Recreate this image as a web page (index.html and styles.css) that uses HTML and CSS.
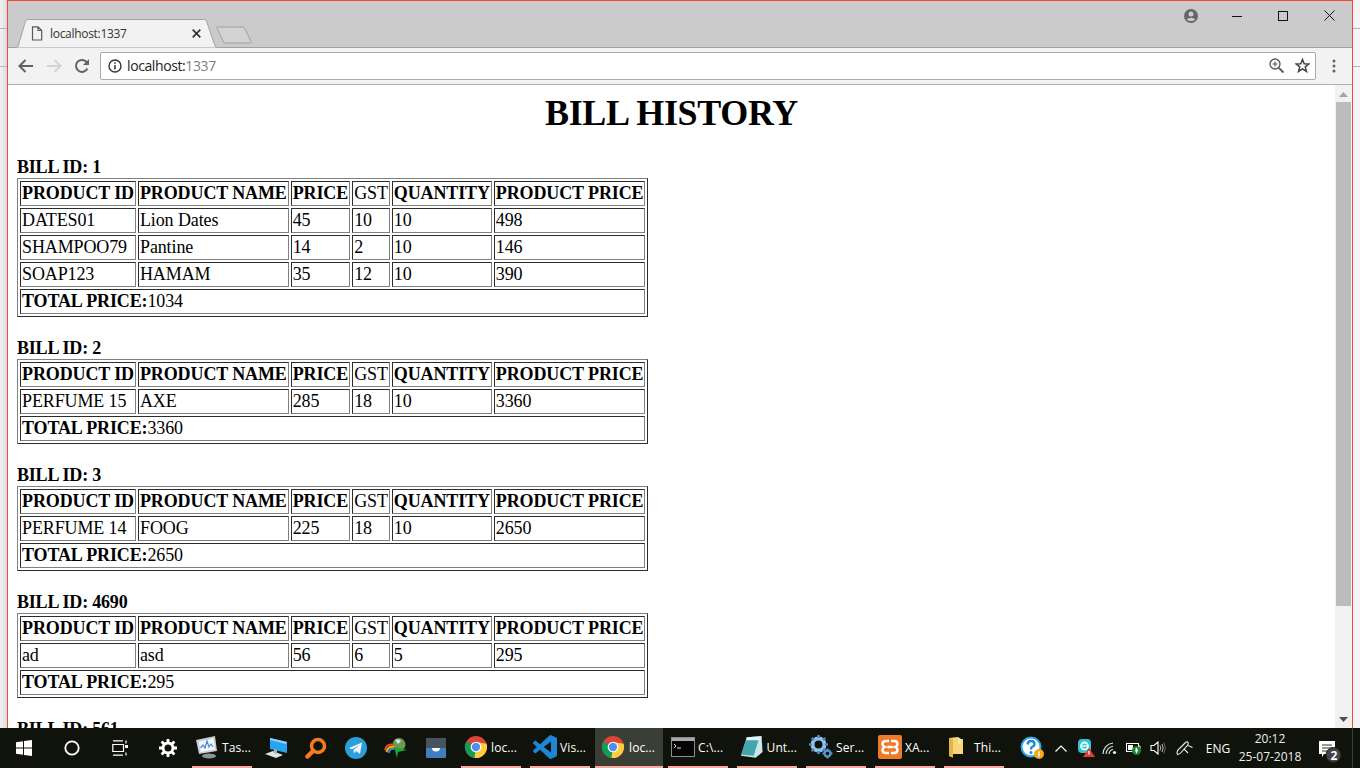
FILE: index.html
```html
<!DOCTYPE html>
<html lang="en">
<head>
<meta charset="utf-8">
<title>localhost:1337</title>
<link rel="stylesheet" href="styles.css">
</head>
<body>
<svg class="defs" width="0" height="0" aria-hidden="true">
  <symbol id="chrome" viewBox="-1 -1 26 26">
    <circle cx="12" cy="12" r="12" fill="#db4437"/>
    <path d="M12 12 L1.600 6 A12 12 0 0 0 10.300 23.900 Z" fill="#0f9d58"/>
    <path d="M12 12 L10.300 23.900 A12 12 0 0 0 23.500 8.600 L12 6.500 Z" fill="#ffcd40"/>
    <circle cx="12" cy="12" r="5.800" fill="#fff"/>
    <circle cx="12" cy="12" r="4.500" fill="#4d8ff0"/>
  </symbol>
</svg>
<div class="desktop">
  <div class="stage">
    <div class="edge edge-left"><i class="edge-line"></i><i class="edge-line"></i></div>
    <div class="window">
      <div class="tabstrip">
        <div class="tab">
          <svg class="tab-shape" width="204" height="29" viewBox="0 0 204 29"><path d="M0 28.500 H1 Q2.500 28.500 3.200 27 L10.500 2 Q11.200 .5 13 .5 H189 Q190.800 .5 191.500 2 L200 27 Q200.700 28.500 202.500 28.500 H204 V29 H0 Z" fill="#f2f2f2" stroke="#a3a3a3"/></svg>
          <svg class="tab-file" width="12" height="15" viewBox="0 0 12 15"><path d="M1.500 .8 H7 L10.700 4.500 V14 H1.500 Z M7 .8 V4.500 H10.700" fill="none" stroke="#5a5a5a" stroke-width="1.200"/></svg>
          <span class="tab-title">localhost:1337</span>
          <svg class="tab-close" width="9" height="9" viewBox="0 0 9 9"><path d="M.7 .7 L8.300 8.300 M8.300 .7 L.7 8.300" stroke="#333" stroke-width="1.700"/></svg>
        </div>
        <svg class="newtab" width="36" height="18" viewBox="0 0 36 18"><path d="M1.500 1 H27 Q28 1 28.500 2 L35 15.500 Q35.300 17 34 17 H9 Q8 17 7.500 16 L1 2 Q.8 1 1.500 1 Z" fill="#d3d3d3" stroke="#a0a0a0" stroke-width="1"/></svg>
        <div class="winctrls">
          <svg class="profile" width="16" height="16" viewBox="0 0 16 16"><circle cx="8" cy="8" r="7" fill="#666"/><circle cx="8" cy="6" r="2.500" fill="#ccc"/><path d="M3.500 11.500 Q8 8 12.500 11.500 Q8 14.500 3.500 11.500 Z" fill="#ccc"/></svg>
          <span class="winbtn"><svg width="10" height="10" viewBox="0 0 10 10"><path d="M0 5.500 H10" stroke="#111" stroke-width="1"/></svg></span>
          <span class="winbtn"><svg width="10" height="10" viewBox="0 0 10 10"><rect x=".5" y=".5" width="9" height="9" fill="none" stroke="#111"/></svg></span>
          <span class="winbtn"><svg width="11" height="11" viewBox="0 0 11 11"><path d="M.5 .5 L10.500 10.500 M10.500 .5 L.5 10.500" stroke="#111" stroke-width="1"/></svg></span>
        </div>
      </div>
      <div class="toolbar">
        <svg class="navicon" width="16" height="14" viewBox="0 0 16 14"><path d="M15 7 H2 M7.500 1 L1.500 7 L7.500 13" fill="none" stroke="#5f6368" stroke-width="2"/></svg>
        <svg class="navicon" width="16" height="14" viewBox="0 0 16 14"><path d="M1 7 H14 M8.500 1 L14.500 7 L8.500 13" fill="none" stroke="#d4d4d4" stroke-width="2"/></svg>
        <svg class="navicon" width="16" height="16" viewBox="0 0 16 16"><path d="M13.400 10.500 A6 6 0 1 1 13 4.600" fill="none" stroke="#5f6368" stroke-width="2"/><path d="M15 1 V7 H9 Z" fill="#5f6368"/></svg>
        <div class="omnibox">
          <svg class="info" width="14" height="14" viewBox="0 0 14 14"><circle cx="7" cy="7" r="6" fill="none" stroke="#333" stroke-width="1.400"/><path d="M7 6 V10.500 M7 3.300 V4.800" stroke="#333" stroke-width="1.500"/></svg>
          <span class="url">localhost:<span class="port">1337</span></span>
          <svg class="omni-zoom" width="17" height="17" viewBox="0 0 17 17"><circle cx="7" cy="7" r="5" fill="none" stroke="#555" stroke-width="1.300"/><path d="M7 4.500 V9.500 M4.500 7 H9.500" stroke="#555" stroke-width="1.100"/><path d="M10.800 10.800 L15.500 15.500" stroke="#555" stroke-width="1.800"/></svg>
          <svg class="omni-star" width="15" height="15" viewBox="0 0 15 15"><path d="M7.500 1.500 L9.200 5.800 L13.900 6 L10.200 8.900 L11.500 13.500 L7.500 10.900 L3.500 13.500 L4.800 8.900 L1.100 6 L5.800 5.800 Z" fill="none" stroke="#444" stroke-width="1.500"/></svg>
        </div>
        <svg class="menu" width="4" height="14" viewBox="0 0 4 14"><circle cx="2" cy="2" r="1.500" fill="#5f6368"/><circle cx="2" cy="7" r="1.500" fill="#5f6368"/><circle cx="2" cy="12" r="1.500" fill="#5f6368"/></svg>
      </div>
      <div class="viewport">
        <div class="page">
          <h1 class="title">BILL HISTORY</h1>

          <section class="bill">
            <div class="bill-id">BILL ID: 1</div>
            <table class="bill-table">
              <tr><th>PRODUCT ID</th><th>PRODUCT NAME</th><th>PRICE</th><td>GST</td><th>QUANTITY</th><th>PRODUCT PRICE</th></tr>
              <tr><td>DATES01</td><td>Lion Dates</td><td>45</td><td>10</td><td>10</td><td>498</td></tr>
              <tr><td>SHAMPOO79</td><td>Pantine</td><td>14</td><td>2</td><td>10</td><td>146</td></tr>
              <tr><td>SOAP123</td><td>HAMAM</td><td>35</td><td>12</td><td>10</td><td>390</td></tr>
              <tr><td colspan="6"><b>TOTAL PRICE:</b>1034</td></tr>
            </table>
          </section>

          <section class="bill">
            <div class="bill-id">BILL ID: 2</div>
            <table class="bill-table">
              <tr><th>PRODUCT ID</th><th>PRODUCT NAME</th><th>PRICE</th><td>GST</td><th>QUANTITY</th><th>PRODUCT PRICE</th></tr>
              <tr><td>PERFUME 15</td><td>AXE</td><td>285</td><td>18</td><td>10</td><td>3360</td></tr>
              <tr><td colspan="6"><b>TOTAL PRICE:</b>3360</td></tr>
            </table>
          </section>

          <section class="bill">
            <div class="bill-id">BILL ID: 3</div>
            <table class="bill-table">
              <tr><th>PRODUCT ID</th><th>PRODUCT NAME</th><th>PRICE</th><td>GST</td><th>QUANTITY</th><th>PRODUCT PRICE</th></tr>
              <tr><td>PERFUME 14</td><td>FOOG</td><td>225</td><td>18</td><td>10</td><td>2650</td></tr>
              <tr><td colspan="6"><b>TOTAL PRICE:</b>2650</td></tr>
            </table>
          </section>

          <section class="bill">
            <div class="bill-id">BILL ID: 4690</div>
            <table class="bill-table">
              <tr><th>PRODUCT ID</th><th>PRODUCT NAME</th><th>PRICE</th><td>GST</td><th>QUANTITY</th><th>PRODUCT PRICE</th></tr>
              <tr><td>ad</td><td>asd</td><td>56</td><td>6</td><td>5</td><td>295</td></tr>
              <tr><td colspan="6"><b>TOTAL PRICE:</b>295</td></tr>
            </table>
          </section>

          <section class="bill">
            <div class="bill-id">BILL ID: 561</div>
          </section>
        </div>
        <div class="scrollbar">
          <svg class="sb-arrow" width="9" height="5" viewBox="0 0 9 5"><path d="M4.500 0 L9 5 H0 Z" fill="#a3a3a3"/></svg>
          <div class="sb-thumb"></div>
          <svg class="sb-arrow sb-arrow-down" width="9" height="5" viewBox="0 0 9 5"><path d="M0 0 H9 L4.500 5 Z" fill="#505050"/></svg>
        </div>
      </div>
    </div>
    <div class="edge edge-right"><i class="edge-line"></i><i class="edge-line"></i></div>
  </div>

  <div class="taskbar">
    <span class="tb-sys"><svg width="16" height="16" viewBox="0 0 16 16"><path d="M0 2.300 L7 1.300 V7.500 H0 Z M8 1.100 L16 0 V7.500 H8 Z M0 8.500 H7 V14.700 L0 13.700 Z M8 8.500 H16 V16 L8 14.900 Z" fill="#fff"/></svg></span>
    <span class="tb-sys"><svg width="16" height="16" viewBox="0 0 16 16"><circle cx="8" cy="8" r="6.700" fill="none" stroke="#fff" stroke-width="1.800"/></svg></span>
    <span class="tb-sys"><svg width="17" height="16" viewBox="0 0 17 16"><path d="M1 .8 H11 M1 15.200 H11 M.8 4.500 H11.500 V11.500 H.8 Z M14 .5 V3.500 M14 12.500 V15.500" fill="none" stroke="#fff" stroke-width="1.200"/><rect x="13" y="5" width="3" height="3" fill="#fff"/></svg></span>
    <span class="tb-sys"><svg width="18" height="18" viewBox="0 0 18 18"><circle cx="9" cy="9" r="5" fill="none" stroke="#fff" stroke-width="3"/><path d="M9 0 V4 M9 14 V18 M0 9 H4 M14 9 H18 M2.600 2.600 L5.500 5.500 M12.500 12.500 L15.400 15.400 M2.600 15.400 L5.500 12.500 M12.500 5.500 L15.400 2.600" stroke="#fff" stroke-width="2.800"/></svg></span>

    <div class="app app-flush">
      <svg width="24" height="24" viewBox="0 0 24 24"><path d="M1 5 L20 1 L22 16 L4 19 Z" fill="#c6ced4"/><path d="M3.500 6.500 L18.500 3.500 L20 14.500 L5.500 17 Z" fill="#f4f8fc"/><path d="M5.500 13 L8 10 L10 13 L12 6 L14 12 L16 9 L18 12" fill="none" stroke="#3d8fd8" stroke-width="1.200"/><ellipse cx="14" cy="21" rx="7" ry="2.500" fill="#8c9297"/></svg>
      <span class="app-label">Tas...</span>
    </div>

    <span class="pin pin-first"><svg width="24" height="22" viewBox="0 0 24 22"><path d="M6 1 L23 5 V16 L6 12 Z" fill="#2aa3ee"/><path d="M6 1 L23 5 L22 7 L6 3 Z" fill="#8ed4fa"/><path d="M1 17 L9 14 L19 18 L12 21 Z" fill="#dfe3e6"/><path d="M10 12 L13 13 V17 L10 16 Z" fill="#aeb5ba"/></svg></span>
    <span class="pin"><svg width="22" height="22" viewBox="0 0 22 22"><circle cx="13" cy="9" r="6.500" fill="none" stroke="#f47b20" stroke-width="3.500"/><path d="M8 14 L2.500 19.500" stroke="#f47b20" stroke-width="4.500" stroke-linecap="round"/></svg></span>
    <span class="pin"><svg width="22" height="22" viewBox="0 0 22 22"><circle cx="11" cy="11" r="11" fill="#2a9fdc"/><path d="M4 11 L17 5.500 L15 17 L11 14 L9 16.500 L8.500 12.800 L14.500 8 L7 12.300 Z" fill="#eef7fc"/></svg></span>
    <span class="pin"><svg width="24" height="22" viewBox="0 0 24 22"><circle cx="15" cy="7.500" r="6.500" fill="#6f9a4b"/><path d="M11 3 Q15 1 17 4 L14 7 Z" fill="#cfe3f5"/><path d="M1 13 Q3 6 10 8" fill="none" stroke="#e8453c" stroke-width="2"/><path d="M2.500 15 Q4 9 10 10" fill="none" stroke="#f4b400" stroke-width="2"/><path d="M4.500 16 Q6 11 10 12" fill="none" stroke="#3f8bde" stroke-width="2"/><path d="M10 10 L23 13 L14 15 L13 21 Z" fill="#15a63c"/></svg></span>
    <span class="pin"><svg width="20" height="20" viewBox="0 0 20 20"><rect width="20" height="20" rx="1.500" fill="#3f7fbb"/><path d="M1.500 0 H18.500 Q20 0 20 1.500 V10 H0 V1.500 Q0 0 1.500 0 Z" fill="#48535d"/><path d="M6 10 A4 3.500 0 0 0 14 10 Z" fill="#fff"/></svg></span>

    <div class="app app-gap-small">
      <svg width="24" height="24"><use href="#chrome"/></svg>
      <span class="app-label">loc...</span>
    </div>
    <div class="app">
      <svg width="24" height="24" viewBox="0 0 24 24"><path fill="#1f86d4" d="M23.150 2.587L18.210.21a1.494 1.494 0 0 0-1.705.29l-9.460 8.630-4.120-3.128a.999.999 0 0 0-1.276.057L.327 7.261A1 1 0 0 0 .326 8.740L3.899 12 .326 15.260a1 1 0 0 0 .001 1.479L1.650 17.940a.999.999 0 0 0 1.276.057l4.120-3.128 9.460 8.630a1.492 1.492 0 0 0 1.704.29l4.942-2.377A1.500 1.500 0 0 0 24 20.060V3.939a1.500 1.500 0 0 0-.85-1.352zm-5.146 14.861L10.826 12l7.178-5.448v10.896z"/></svg>
      <span class="app-label">Vis...</span>
    </div>
    <div class="app app-active app-gap-small">
      <svg width="24" height="24"><use href="#chrome"/></svg>
      <span class="app-label">loc...</span>
    </div>
    <div class="app app-gap-small">
      <svg width="24" height="20" viewBox="0 0 24 20"><rect x=".5" y=".5" width="23" height="19" fill="#050505" stroke="#8d8d8d"/><rect x="1" y="1" width="22" height="3" fill="#a8a8a8"/><path d="M3 7 L5 9 L3 11 M6 11 H10" fill="none" stroke="#ddd"/></svg>
      <span class="app-label">C:\...</span>
    </div>
    <div class="app">
      <svg width="24" height="24" viewBox="0 0 24 24"><path d="M7 2 L22 1 L23 17 L16 23 L1 21 Z" fill="#c9e6e8"/><path d="M7 2 L20 1 L14 21 L1 20 Z" fill="#45a5ae"/><path d="M7 2 L22 1 L21 5 L6 5 Z" fill="#e4f3f4"/></svg>
      <span class="app-label">Unt...</span>
    </div>
    <div class="app">
      <svg width="24" height="24" viewBox="0 0 24 24"><circle cx="9.500" cy="9.500" r="6" fill="none" stroke="#8fc3ec" stroke-width="4"/><path d="M9.500 0 V3 M9.500 16 V19 M0 9.500 H3 M16 9.500 H19 M2.800 2.800 L5 5 M14 14 L16.200 16.200 M2.800 16.200 L5 14 M14 5 L16.200 2.800" stroke="#4d86c0" stroke-width="2.600"/><circle cx="18.500" cy="18.500" r="3" fill="none" stroke="#5a94cc" stroke-width="2.400"/><path d="M18.500 13.500 V15 M18.500 22 V23.500 M13.500 18.500 H15 M22 18.500 H23.500" stroke="#5a94cc" stroke-width="1.800"/></svg>
      <span class="app-label">Ser...</span>
    </div>
    <div class="app">
      <svg width="24" height="24" viewBox="0 0 24 24"><rect width="24" height="24" rx="2" fill="#ef7b2a"/><path d="M11 6 H8 Q4.500 6 4.500 9 Q4.500 11 7 12 Q4.500 13 4.500 15 Q4.500 18 8 18 H11 M13 6 H16 Q19.500 6 19.500 9 Q19.500 11 17 12 Q19.500 13 19.500 15 Q19.500 18 16 18 H13 M9.500 12 H14.500" fill="none" stroke="#fff" stroke-width="2.400"/></svg>
      <span class="app-label">XA...</span>
    </div>
    <div class="app">
      <svg width="24" height="24" viewBox="0 0 24 24"><path d="M2 3 L11 2 V4 H16 V19 H6 V22.500 L2 21 Z" fill="#f8d675"/><path d="M11 2 L14 4 V10 L11 8 Z" fill="#fbe7a5"/><path d="M2 3 L6 4 V22.500 L2 21 Z" fill="#e2b44a"/></svg>
      <span class="app-label">Thi...</span>
    </div>

    <div class="tray">
      <span class="tray-item tray-help"><svg width="24" height="24" viewBox="0 0 24 24"><circle cx="11" cy="11" r="9.500" fill="#fff" stroke="#29a8e8" stroke-width="2"/><path d="M7.500 8.500 Q8 5 11 5 Q14.500 5 14.500 8 Q14.500 10 12 11 Q11 11.500 11 13.500" fill="none" stroke="#1c8bd0" stroke-width="2.400"/><circle cx="11" cy="16.500" r="1.500" fill="#1c8bd0"/><circle cx="19" cy="18" r="5" fill="#f3a81f"/><path d="M19 15.500 V20.500" stroke="#fff" stroke-width="1.500"/></svg></span>
      <span class="tray-item tray-chev"><svg width="12" height="7" viewBox="0 0 12 7"><path d="M.5 6.500 L6 1 L11.500 6.500" fill="none" stroke="#fff" stroke-width="1.200"/></svg></span>
      <span class="tray-item"><svg width="18" height="18" viewBox="0 0 18 18"><rect x="1" y="0" width="13" height="14" rx="4" fill="#2ec4d0"/><circle cx="7.500" cy="7" r="3.500" fill="none" stroke="#fff" stroke-width="1.800"/><path d="M4.500 7 H10.500" stroke="#fff" stroke-width="1.300"/><path d="M12 9 L18 18 H6 Z" fill="#e53935"/><path d="M12 12 V15.500" stroke="#fff" stroke-width="1.300"/></svg></span>
      <span class="tray-item"><svg width="16" height="14" viewBox="0 0 16 14"><path d="M1 13 A11 11 0 0 1 11 2 M4 13 A8 8 0 0 1 11 5.200 M7 13 A5 5 0 0 1 11 8.500" fill="none" stroke="#e8e8e8" stroke-width="1.100"/><circle cx="12.500" cy="11.500" r="1.600" fill="#eee"/></svg></span>
      <span class="tray-item"><svg width="16" height="14" viewBox="0 0 16 14"><rect x=".5" y="2.500" width="12" height="8" fill="none" stroke="#fff"/><rect x="2" y="4" width="5" height="5" fill="#fff"/><path d="M12.500 5 H14 V8 H12.500" fill="none" stroke="#fff"/><circle cx="10.500" cy="9.500" r="4.500" fill="#198a32"/><path d="M10.500 6.500 Q13 9 10.500 12.500 Q8 9 10.500 6.500 Z" fill="#fff"/></svg></span>
      <span class="tray-item"><svg width="16" height="14" viewBox="0 0 16 14"><path d="M1 4.500 H4 L8 1 V13 L4 9.500 H1 Z" fill="none" stroke="#fff" stroke-width="1.100"/><path d="M10 4.500 Q11.500 7 10 9.500 M12 3 Q14.200 7 12 11" fill="none" stroke="#bbb" stroke-width="1"/><path d="M14 1.500 Q16.600 7 14 12.500" fill="none" stroke="#666" stroke-width="1"/></svg></span>
      <span class="tray-item tray-pen"><svg width="18" height="16" viewBox="0 0 18 16"><path d="M1.500 14.500 Q0 11 3.500 8.500 L9 3 Q11 1 12 2.500 Q13 4 11 6 L5.500 12 Q3 15 1.500 14.500 Z M8 9 L12 13 M11 5 L16.500 7.500" fill="none" stroke="#eee" stroke-width="1.100"/></svg></span>
      <span class="tray-item tray-lang">ENG</span>
      <span class="tray-item tray-clock"><span>20:12</span><span>25-07-2018</span></span>
      <span class="tray-item tray-notify"><svg class="notify-icon" width="24" height="24" viewBox="0 0 24 24"><path d="M1 1 H17 V14 H6 L4 17 V14 H1 Z" fill="#fff"/><path d="M4 5 H14 M4 8 H14 M4 11 H11" stroke="#333" stroke-width="1"/><circle cx="15.500" cy="15" r="7.500" fill="#444" stroke="#1a1a1a"/></svg><span class="notify-count">2</span></span>
      <span class="show-desktop"></span>
    </div>
  </div>
</div>
</body>
</html>
```

FILE: styles.css
```css
* { box-sizing: border-box; }
html, body { margin: 0; padding: 0; height: 100%; overflow: hidden; }
.defs { display: block; height: 0; }
.desktop { display: flex; flex-direction: column; width: 1360px; height: 768px; font-family: "Open Sans", "Noto Sans", sans-serif; }
.stage { display: flex; height: 728px; }
.edge { width: 7px; display: flex; flex-direction: column; gap: 37px; padding-top: 28px; background: #f0f0f0; }
.edge-left { background: linear-gradient(90deg, #f2f2f2, #dcdcdc); }
.edge-right { background: #f4f4f4; }
.edge-line { display: block; height: 1px; background: #b5b5b5; }
.window { width: 1346px; display: flex; flex-direction: column; border: 1px solid #f04a38; border-bottom: 0; background: #fff; }

.tabstrip { position: relative; display: flex; align-items: flex-end; height: 47px; flex: none; background: #cbcbcb; border-bottom: 1px solid #a3a3a3; padding-left: 7px; }
.tab { position: relative; display: flex; align-items: center; width: 204px; height: 29px; margin-bottom: -1px; }
.tab-shape { position: absolute; left: 0; top: 0; }
.tab-file { position: relative; margin-left: 16px; }
.tab-title { position: relative; margin-left: 7px; font-size: 12px; color: #333; letter-spacing: -.3px; width: 142px; }
.tab-close { position: relative; }
.newtab { margin: 0 0 3px -3px; }
.winctrls { display: flex; align-items: center; margin-left: auto; align-self: flex-start; height: 29px; }
.profile { margin-right: 15px; }
.winbtn { display: flex; justify-content: center; width: 46px; }

.toolbar { display: flex; align-items: center; height: 37px; flex: none; background: #f2f2f2; border-bottom: 1px solid #aeaeae; padding: 0 0 1px 10px; }
.navicon { margin-right: 12px; }
.omnibox { display: flex; align-items: center; width: 1216px; height: 28px; margin-left: -2px; background: #fff; border: 1px solid #a9a9a9; border-radius: 2px; padding: 0 5px 0 7px; }
.info { flex: none; }
.url { margin-left: 5px; font-size: 14px; letter-spacing: -.4px; color: #222; }
.port { color: #808080; }
.omni-zoom { margin-left: auto; }
.omni-star { margin-left: 10px; }
.menu { margin-left: 16px; }

.viewport { display: flex; flex: 1; min-height: 0; overflow: hidden; }
.page { flex: 1; padding: 7px 9px 0; overflow: hidden; font-family: "Liberation Serif", "Times New Roman", serif; font-size: 18px; color: #000; background: #fff; }
.title { margin: 0 0 23px; font-size: 36px; font-weight: bold; text-align: center; letter-spacing: -.35px; }
.bill { margin-bottom: 21px; }
.bill-id { font-weight: bold; letter-spacing: -.2px; }
.bill-table { border: 1px outset #808080; border-collapse: separate; border-spacing: 2px; letter-spacing: -.12px; }
.bill-table th, .bill-table td { border: 1px inset #808080; padding: 1px; text-align: left; }

.scrollbar { position: relative; display: flex; flex-direction: column; align-items: center; width: 17px; flex: none; background: #f1f1f1; padding-top: 7px; }
.sb-thumb { width: 15px; height: 504px; margin-top: 5px; background: #bcbcbc; }
.sb-arrow { flex: none; }
.sb-arrow-down { margin-top: auto; margin-bottom: 6px; }

.taskbar { display: flex; align-items: stretch; height: 40px; background: #10130b; color: #fff; font-size: 12px; }
.tb-sys { display: flex; align-items: center; justify-content: center; width: 48px; flex: none; }
.pin { display: flex; align-items: center; justify-content: center; width: 40px; flex: none; }
.pin-first { margin-left: 4px; }
.app { display: flex; align-items: center; width: 60px; flex: none; margin-left: 9px; padding-left: 3px; border-bottom: 2px solid #f8a9a0; gap: 3px; }
.app-flush { margin-left: 0; }
.app-gap-small { margin-left: 5px; }
.app-active { width: 68px; background: #3a3f35; padding-left: 6px; gap: 4px; }
.app-label { white-space: nowrap; letter-spacing: .1px; }

.tray { display: flex; align-items: stretch; margin-left: auto; flex: none; }
.tray-item { display: flex; align-items: center; justify-content: center; width: 24px; flex: none; }
.tray-help { width: 30px; }
.tray-chev { width: 27px; }
.tray-pen { width: 30px; }
.tray-lang { width: 36px; font-size: 12px; }
.tray-clock { width: 68px; flex-direction: column; font-size: 12px; line-height: 18px; color: #eee; }
.tray-notify { position: relative; width: 48px; }
.notify-icon { margin: 8px 0 0 4px; }
.notify-count { position: absolute; left: 22px; top: 19px; width: 16px; text-align: center; font-size: 12px; font-weight: bold; color: #fff; }
.show-desktop { width: 8px; border-left: 1px solid #3d4038; }
```
